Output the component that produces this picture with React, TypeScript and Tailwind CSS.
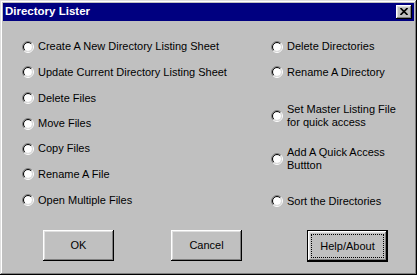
import React from "react";

function Radio() {
  const r1 = 5.5;
  const r2 = 4.5;
  const a1 = r1 / Math.SQRT2;
  const a2 = r2 / Math.SQRT2;
  return (
    <svg width="12" height="12" viewBox="0 0 12 12" className="shrink-0">
      <circle cx="6" cy="6" r="4" fill="#ffffff" />
      <path d={`M ${6 - a1} ${6 + a1} A ${r1} ${r1} 0 0 1 ${6 + a1} ${6 - a1}`} fill="none" stroke="#808080" strokeWidth="1" />
      <path d={`M ${6 + a1} ${6 - a1} A ${r1} ${r1} 0 0 1 ${6 - a1} ${6 + a1}`} fill="none" stroke="#ffffff" strokeWidth="1" />
      <path d={`M ${6 - a2} ${6 + a2} A ${r2} ${r2} 0 0 1 ${6 + a2} ${6 - a2}`} fill="none" stroke="#000000" strokeWidth="1" />
      <path d={`M ${6 + a2} ${6 - a2} A ${r2} ${r2} 0 0 1 ${6 - a2} ${6 + a2}`} fill="none" stroke="#dfdfdf" strokeWidth="1" />
    </svg>
  );
}

function Option({ lines, className }: { lines: string[]; className: string }) {
  return (
    <div className={`flex items-center gap-[4px] ${className}`}>
      <Radio />
      <div className="leading-[13px]">
        {lines.map((l) => (
          <div key={l} className="whitespace-nowrap">{l}</div>
        ))}
      </div>
    </div>
  );
}

const bevel =
  "shadow-[inset_-1px_-1px_#000000,inset_1px_1px_#ffffff,inset_-2px_-2px_#808080,inset_2px_2px_#dfdfdf]";

export default function App() {
  return (
    <div className="w-[417px] h-[275px] bg-[#c0c0c0] p-[3px] flex flex-col font-['Liberation_Sans',Arial,sans-serif] text-[11px] text-black shadow-[inset_-1px_-1px_#000000,inset_1px_1px_#dfdfdf,inset_-2px_-2px_#808080,inset_2px_2px_#ffffff]">
      <div className="h-[18px] bg-[#000080] flex items-center justify-between pl-[2px] pr-[2px]">
        <span className="text-white font-bold text-[11.5px]">Directory Lister</span>
        <div className={`w-[16px] h-[14px] bg-[#c0c0c0] flex items-center justify-center ${bevel}`}>
          <svg width="8" height="7" viewBox="0 0 8 7" className="-mt-px">
            <path d="M0.5 0 L7.5 7 M7.5 0 L0.5 7" stroke="#000" strokeWidth="1.6" />
          </svg>
        </div>
      </div>

      <div className="flex mt-[13px]">
        <div className="w-[268px] pl-[19px] flex flex-col">
          <Option className="h-[25px]" lines={["Create A New Directory Listing Sheet"]} />
          <Option className="h-[26px]" lines={["Update Current Directory Listing Sheet"]} />
          <Option className="h-[26px]" lines={["Delete Files"]} />
          <Option className="h-[25px]" lines={["Move Files"]} />
          <Option className="h-[25px]" lines={["Copy Files"]} />
          <Option className="h-[26px]" lines={["Rename A File"]} />
          <Option className="h-[26px]" lines={["Open Multiple Files"]} />
        </div>
        <div className="flex flex-col">
          <Option className="h-[25px]" lines={["Delete Directories"]} />
          <Option className="h-[26px]" lines={["Rename A Directory"]} />
          <Option className="h-[26px] mt-[18px]" lines={["Set Master Listing File", "for quick access"]} />
          <Option className="h-[26px] mt-[17px]" lines={["Add A Quick Access", "Buttton"]} />
          <Option className="h-[26px] mt-[16px]" lines={["Sort the Directories"]} />
        </div>
      </div>

      <div className="flex mt-[16px] pl-[40px]">
        <div className={`w-[71px] h-[31px] flex items-center justify-center ${bevel}`}>OK</div>
        <div className={`w-[71px] h-[31px] ml-[57px] flex items-center justify-center ${bevel}`}>Cancel</div>
        <div className="w-[81px] h-[32px] ml-[65px] border border-black">
          <div className={`w-full h-full p-[3px] ${bevel}`}>
            <div className="w-full h-full border border-dotted border-black flex items-center justify-center">
              Help/About
            </div>
          </div>
        </div>
      </div>
    </div>
  );
}
